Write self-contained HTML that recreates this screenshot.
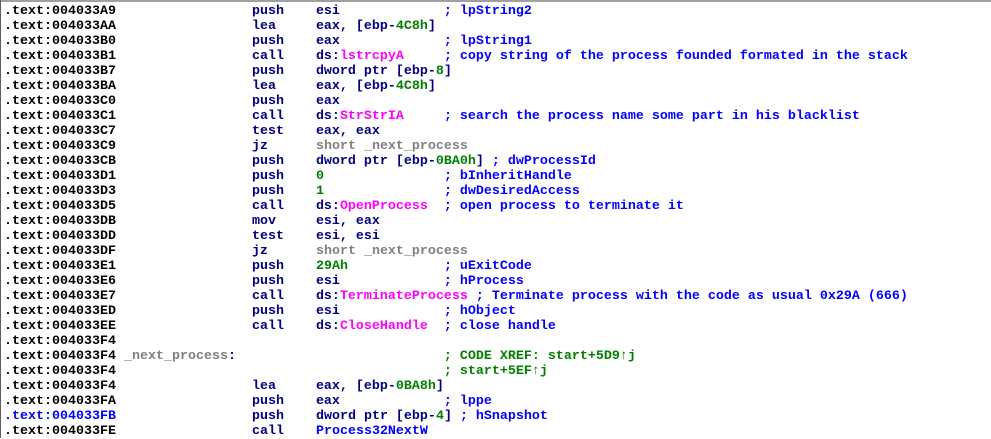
<!DOCTYPE html>
<html><head><style>
html,body{margin:0;padding:0;background:#fff;width:991px;height:438px;overflow:hidden}
.top{position:absolute;left:0;top:0;width:991px;height:2px;background:#a0a0a0}
.left{position:absolute;left:0;top:0;width:1px;height:438px;background:#606060}
pre{position:absolute;left:4px;top:4px;margin:0;font-family:"Liberation Mono",monospace;font-weight:bold;font-size:13.33px;line-height:15px;color:#000}
.m{color:#000080}.c{color:#0000ff}.n{color:#008000}.i{color:#ff00ff}.l{color:#808080}.g{color:#008000}.b{color:#0000ff}
</style></head><body><div class="top"></div><div class="left"></div><pre>.text:004033A9                 <span class="m">push    esi</span>             <span class="c">; lpString2</span>
.text:004033AA                 <span class="m">lea     eax, [ebp-<span class="n">4C8h</span>]</span>
.text:004033B0                 <span class="m">push    eax</span>             <span class="c">; lpString1</span>
.text:004033B1                 <span class="m">call    ds:<span class="i">lstrcpyA</span></span>     <span class="c">; copy string of the process founded formated in the stack</span>
.text:004033B7                 <span class="m">push    dword ptr [ebp-<span class="n">8</span>]</span>
.text:004033BA                 <span class="m">lea     eax, [ebp-<span class="n">4C8h</span>]</span>
.text:004033C0                 <span class="m">push    eax</span>
.text:004033C1                 <span class="m">call    ds:<span class="i">StrStrIA</span></span>     <span class="c">; search the process name some part in his blacklist</span>
.text:004033C7                 <span class="m">test    eax, eax</span>
.text:004033C9                 <span class="m">jz      </span><span class="l">short _next_process</span>
.text:004033CB                 <span class="m">push    dword ptr [ebp-<span class="n">0BA0h</span>]</span> <span class="c">; dwProcessId</span>
.text:004033D1                 <span class="m">push    <span class="n">0</span></span>               <span class="c">; bInheritHandle</span>
.text:004033D3                 <span class="m">push    <span class="n">1</span></span>               <span class="c">; dwDesiredAccess</span>
.text:004033D5                 <span class="m">call    ds:<span class="i">OpenProcess</span></span>  <span class="c">; open process to terminate it</span>
.text:004033DB                 <span class="m">mov     esi, eax</span>
.text:004033DD                 <span class="m">test    esi, esi</span>
.text:004033DF                 <span class="m">jz      </span><span class="l">short _next_process</span>
.text:004033E1                 <span class="m">push    <span class="n">29Ah</span></span>            <span class="c">; uExitCode</span>
.text:004033E6                 <span class="m">push    esi</span>             <span class="c">; hProcess</span>
.text:004033E7                 <span class="m">call    ds:<span class="i">TerminateProcess</span></span> <span class="c">; Terminate process with the code as usual 0x29A (666)</span>
.text:004033ED                 <span class="m">push    esi</span>             <span class="c">; hObject</span>
.text:004033EE                 <span class="m">call    ds:<span class="i">CloseHandle</span></span>  <span class="c">; close handle</span>
.text:004033F4
.text:004033F4 <span class="l">_next_process</span><span class="m">:</span>                          <span class="g">; CODE XREF: start+5D9&#8593;j</span>
.text:004033F4                                         <span class="g">; start+5EF&#8593;j</span>
.text:004033F4                 <span class="m">lea     eax, [ebp-<span class="n">0BA8h</span>]</span>
.text:004033FA                 <span class="m">push    eax</span>             <span class="c">; lppe</span>
<span class="b">.text:004033FB</span>                 <span class="m">push    dword ptr [ebp-<span class="n">4</span>]</span> <span class="c">; hSnapshot</span>
.text:004033FE                 <span class="m">call    <span class="c">Process32NextW</span></span>
</pre></body></html>
